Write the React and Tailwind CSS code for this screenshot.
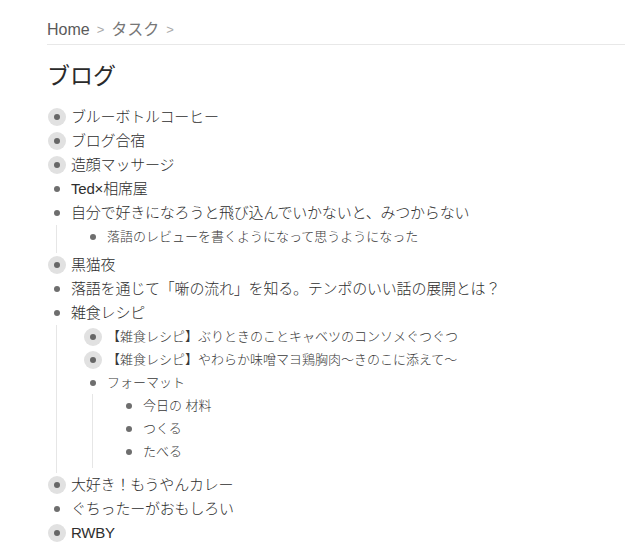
const TREE = [
  { text: 'ブルーボトルコーヒー', collapsed: true },
  { text: 'ブログ合宿', collapsed: true },
  { text: '造顔マッサージ', collapsed: true },
  { text: 'Ted×相席屋' },
  {
    text: '自分で好きになろうと飛び込んでいかないと、みつからない',
    children: [{ text: '落語のレビューを書くようになって思うようになった' }],
  },
  { text: '黒猫夜', collapsed: true },
  { text: '落語を通じて「噺の流れ」を知る。テンポのいい話の展開とは？' },
  {
    text: '雑食レシピ',
    children: [
      { text: '【雑食レシピ】ぶりときのことキャベツのコンソメぐつぐつ', collapsed: true },
      { text: '【雑食レシピ】やわらか味噌マヨ鶏胸肉〜きのこに添えて〜', collapsed: true },
      {
        text: 'フォーマット',
        children: [{ text: '今日の 材料' }, { text: 'つくる' }, { text: 'たべる' }],
      },
    ],
  },
  { text: '大好き！もうやんカレー', collapsed: true },
  { text: 'ぐちったーがおもしろい' },
  { text: 'RWBY', collapsed: true },
]

// collapsed nodes get the grey halo, open/leaf nodes a plain dot
function Bullet({ collapsed }) {
  return (
    <span className="flex w-5 shrink-0 items-center justify-center">
      {collapsed ? (
        <span className="flex h-[18px] w-[18px] items-center justify-center rounded-full bg-[#e1e1e1]">
          <span className="h-[6px] w-[6px] rounded-full bg-[#666]" />
        </span>
      ) : (
        <span className="h-[6px] w-[6px] rounded-full bg-[#6e6e6e]" />
      )}
    </span>
  )
}

function Item({ node, depth }) {
  const top = depth === 0
  return (
    <div>
      <div className={`flex items-center ${top ? 'h-6' : 'h-[23px]'}`}>
        <Bullet collapsed={node.collapsed} />
        <span
          className={`ml-1 whitespace-nowrap font-light ${
            top ? 'text-[15px] tracking-[-0.2px] text-[#2e2e2e]' : 'text-[13px] text-[#383838]'
          }`}
        >
          {node.text}
        </span>
      </div>
      {node.children && (
        <div className="ml-[9px] border-l border-[#e6e6e6] pb-[5px] pl-[26px]">
          {node.children.map((c) => (
            <Item key={c.text} node={c} depth={depth + 1} />
          ))}
        </div>
      )}
    </div>
  )
}

export default function App() {
  return (
    <div
      className="min-h-[544px] bg-white pl-[47px]"
      style={{ fontFamily: '"Liberation Sans", "Noto Sans CJK JP", sans-serif' }}
    >
      <div className="flex items-center gap-[7px] border-b border-[#e8e8e8] pb-[4px] pt-[20px] text-[16px] leading-5">
        <span className="text-[#5a5a5a]">Home</span>
        <span className="text-[13px] text-[#aaa]">&gt;</span>
        <span className="text-[#777]">タスク</span>
        <span className="text-[13px] text-[#aaa]">&gt;</span>
      </div>
      <h1 className="mt-[16px] text-[23px] leading-[30px] text-[#2a2a2a]">ブログ</h1>
      <div className="mt-[14px]">
        {TREE.map((n) => (
          <Item key={n.text} node={n} depth={0} />
        ))}
      </div>
    </div>
  )
}
